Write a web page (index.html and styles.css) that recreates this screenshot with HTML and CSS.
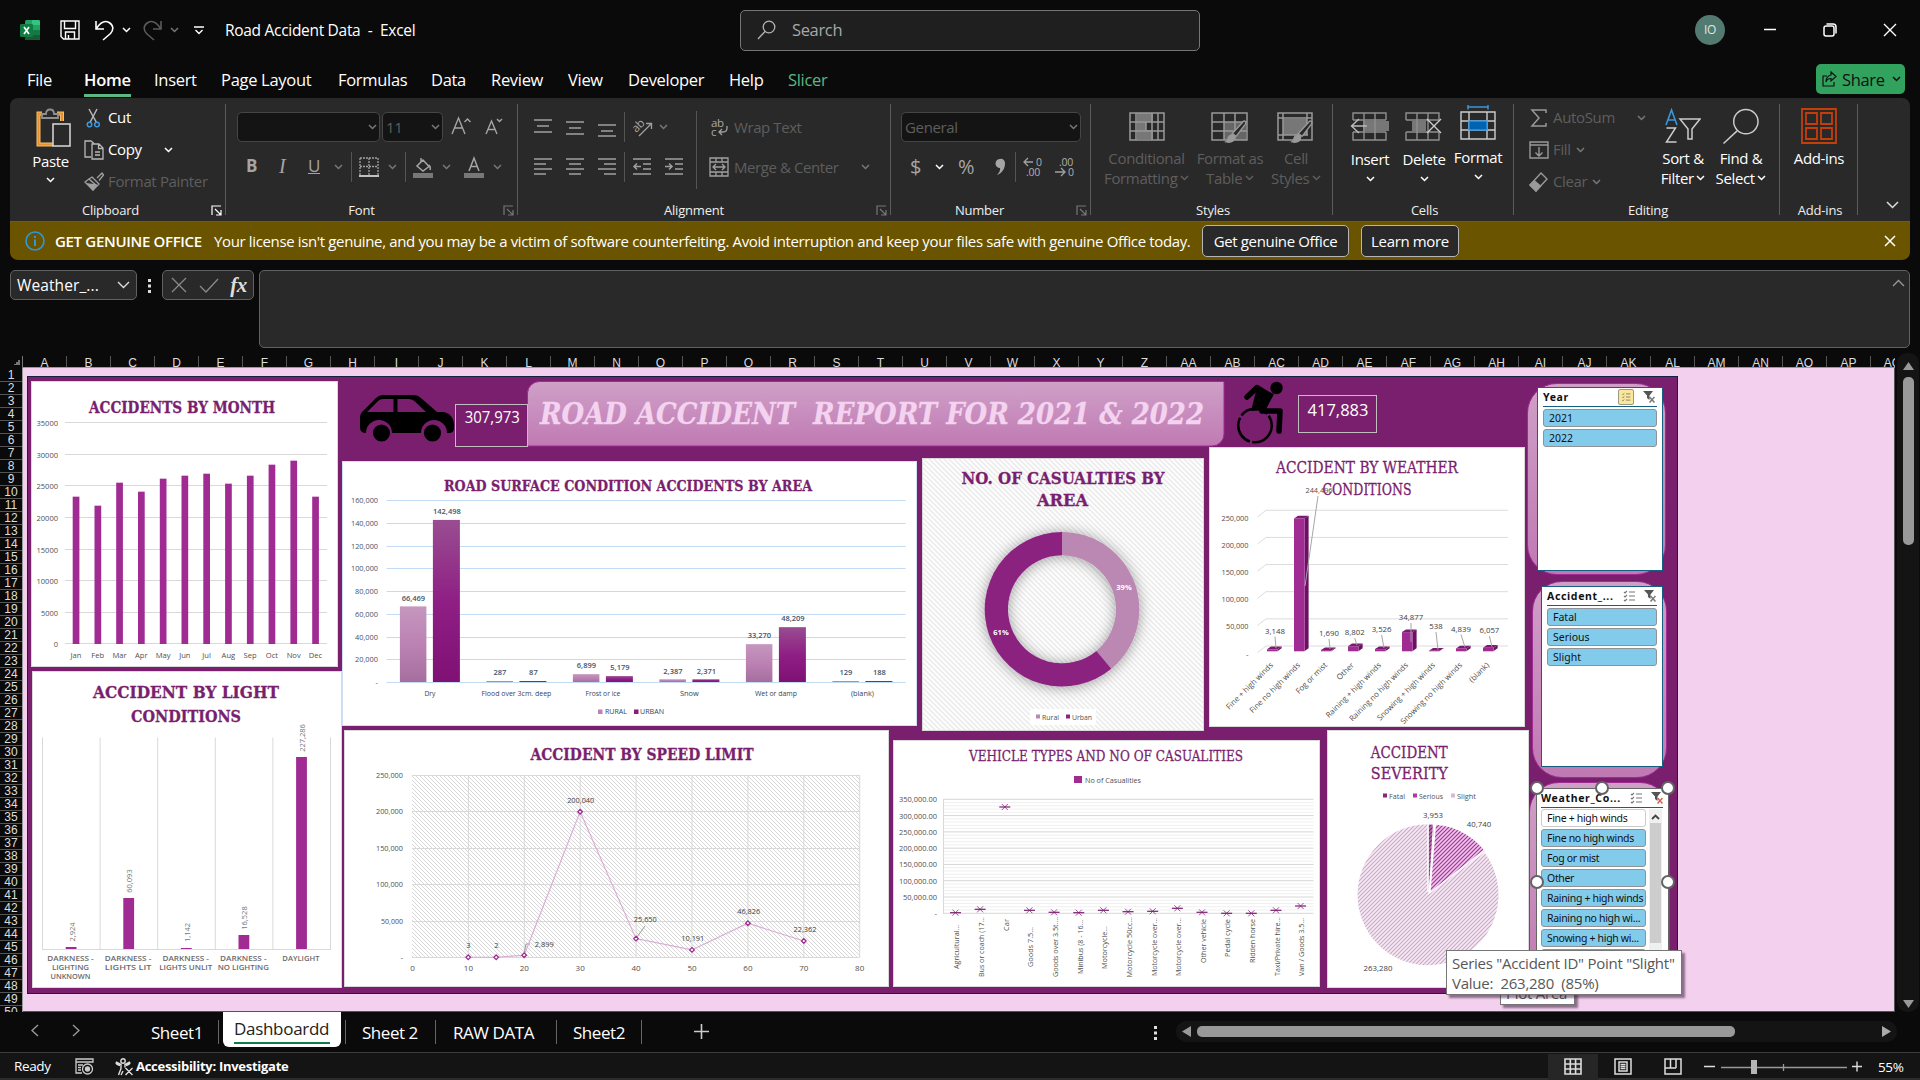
FILE: index.html
```html
<!DOCTYPE html>
<html lang="en">
<head>
<meta charset="utf-8">
<title>Road Accident Data - Excel</title>
<link rel="stylesheet" href="styles.css">
</head>
<body>
<svg class="defs" aria-hidden="true">
  <symbol id="chev" viewBox="0 0 9 6"><path d="M1 1l3.500 3.500L8 1" fill="none" stroke="currentColor" stroke-width="1.500"/></symbol>
  <symbol id="launch" viewBox="0 0 11 11"><path d="M1 10V1h9M4 4l6 6M10 5v5H5" fill="none" stroke="currentColor" stroke-width="1.200"/></symbol>
  <symbol id="brush" viewBox="0 0 22 22"><path d="M20 1c1.500 1 1 2 .3 3L12 15l-3.500-2.500L18 2q1-1.300 2-1z" fill="#292929" stroke="currentColor" stroke-width="1.300"/><path d="M8 13c3 0 4 3 2.500 5.500S4 22 1 20c3-1 2.500-2 3.300-4.500Q5.500 13 8 13z" fill="currentColor"/></symbol>
  <symbol id="multi" viewBox="0 0 12 12"><path d="M1 2l1 1 2-2M1 6l1 1 2-2M1 10l1 1 2-2M6 2h6M6 6h6M6 10h6" fill="none" stroke="currentColor" stroke-width="1.100"/></symbol>
  <symbol id="funnel" viewBox="0 0 12 12"><path d="M0 0h10L6.500 4.500V9L4 7V4.500z" fill="#555"/><path d="M6.500 6l5 5.500M11.500 6l-5 5.500" stroke="currentColor" stroke-width="1.500"/></symbol>
</svg>

<header class="titlebar">
  <div class="quick">
    <svg width="20" height="20" viewBox="0 0 20 20"><rect x="5" width="15" height="20" rx="1.500" fill="#21a366"/><path d="M12 0h6.500A1.500 1.500 0 0 1 20 1.500V5h-8z" fill="#33c481"/><path d="M5 5h7v5H5zM12 10h8v5h-8z" fill="#107c41"/><path d="M5 15h15v3.500a1.500 1.500 0 0 1-1.500 1.500h-12A1.500 1.500 0 0 1 5 18.500z" fill="#185c37"/><rect y="4" width="13" height="13" rx="1.200" fill="#107c41"/><path d="M4 7l5 7M9 7l-5 7" stroke="#fff" stroke-width="1.700"/></svg>
    <svg width="20" height="20" viewBox="0 0 20 20" fill="none" stroke="#fff" stroke-width="1.400"><path d="M1 1h18v18H3.500L1 16.500zM4.500 1v7.500h11V1M5.500 19v-7h9v7M8.500 19v-4"/></svg>
    <svg width="19" height="21" viewBox="0 0 19 21" fill="none" stroke="#fff" stroke-width="1.600"><path d="M1 1v8h8M1.500 8.500C5 3 9.500 0 14 2.500s5 7 1.500 11L8 20"/></svg>
    <svg class="chev light" width="9" height="6"><use href="#chev"/></svg>
    <svg width="19" height="21" viewBox="0 0 19 21" fill="none" stroke="#5a5a5a" stroke-width="1.600"><path d="M18 1v8h-8M17.500 8.500C14 3 9.500 0 5 2.500s-5 7-1.500 11L11 20"/></svg>
    <svg class="chev" width="9" height="6"><use href="#chev"/></svg>
    <svg width="10" height="9" viewBox="0 0 10 9" fill="none" stroke="#fff" stroke-width="1.400"><path d="M0 1h10M1.500 4L5 7.500 8.500 4"/></svg>
    <span class="doc">Road Accident Data &nbsp;-&nbsp; Excel</span>
  </div>
  <div class="search">
    <svg width="19" height="20" viewBox="0 0 19 20" fill="none" stroke="#b5b5b5" stroke-width="1.300"><circle cx="12" cy="7" r="5.800"/><path d="M8 11.500L1 19"/></svg>
    <span>Search</span>
  </div>
  <div class="window">
    <span class="avatar">IO</span>
    <svg width="12" height="4"><path d="M0 1.500h12" stroke="#fff" stroke-width="1.500"/></svg>
    <svg width="14" height="14" viewBox="0 0 14 14" fill="none" stroke="#fff" stroke-width="1.500"><rect x="1" y="3" width="10" height="10" rx="2"/><path d="M3.500 1H10a3 3 0 0 1 3 3v6.500"/></svg>
    <svg width="14" height="14" viewBox="0 0 14 14"><path d="M1 1l12 12M13 1L1 13" stroke="#fff" stroke-width="1.400"/></svg>
  </div>
</header>

<nav class="menu">
  <span>File</span><span class="on">Home</span><span>Insert</span><span>Page Layout</span><span>Formulas</span><span>Data</span><span>Review</span><span>View</span><span>Developer</span><span>Help</span><span class="ctx">Slicer</span>
  <button class="share"><svg width="15" height="16" viewBox="0 0 15 16" fill="none" stroke="#111" stroke-width="1.200"><path d="M5 5H1v10h11v-4M9 1l5 4.500L9 10V7.500q-4 0-5 3.500 0-6 5-7z"/></svg><b>Share</b><svg class="chev" width="9" height="6"><use href="#chev"/></svg></button>
</nav>

<section class="ribbon">
  <div class="group g-clip">
    <div class="body">
      <div class="big">
        <svg width="35" height="39" viewBox="0 0 35 39" fill="none"><path d="M6 5.500H2.500v31H17M21 5.500h5V13" stroke="#f0c070" stroke-width="4"/><path d="M6 5.500H2.500v31H17M21 5.500h5V13" stroke="#e8912d" stroke-width="2"/><path d="M6 10V6h4q0-4.500 4-4.500T18 6h4v4z" fill="#292929" stroke="#8f8f8f" stroke-width="1.800"/><rect x="17" y="16" width="17" height="22" fill="#292929" stroke="#d0d0d0" stroke-width="1.600"/></svg>
        <span>Paste</span><svg class="chev light" width="9" height="6"><use href="#chev"/></svg>
      </div>
      <div class="list">
        <div><svg width="20" height="20" viewBox="0 0 20 20" fill="none"><path d="M5 1l7.500 13.500M13 1L6 14.500" stroke="#b8b8b8" stroke-width="1.500"/><circle cx="5.500" cy="16.500" r="2.300" stroke="#3a96dd" stroke-width="1.500"/><circle cx="13" cy="16.500" r="2.300" stroke="#3a96dd" stroke-width="1.500"/></svg><span>Cut</span></div>
        <div><svg width="20" height="20" viewBox="0 0 20 20" fill="none" stroke="#b8b8b8" stroke-width="1.300"><path d="M7 17H1V1h6l3 2.500M8 4h7l4 4v11H8zM14.500 4v4.500H19M11 12h5M11 15h5"/></svg><span>Copy</span><svg class="chev light far" width="9" height="6"><use href="#chev"/></svg></div>
        <div class="off"><svg width="20" height="20" viewBox="0 0 20 20" fill="none" stroke="#a0a0a0" stroke-width="1.300"><path d="M13 6l5-5 1.500 2-4.500 5.500M8 5l7 7-2 2-8-7zM5 7l-4 3 8 8 4-4"/><path d="M4 12l8 1-3 5z" fill="#a0a0a0"/></svg><span>Format Painter</span></div>
      </div>
    </div>
    <footer><span>Clipboard</span><svg class="light" width="11" height="11"><use href="#launch"/></svg></footer>
  </div>
  <div class="group g-font">
    <div class="rows">
      <div class="r1"><div class="combo"><span></span><svg class="chev" width="9" height="6"><use href="#chev"/></svg></div><div class="combo s"><span>11</span><svg class="chev" width="9" height="6"><use href="#chev"/></svg></div>
        <svg width="20" height="20" viewBox="0 0 20 20" fill="none" stroke="#a5a5a5" stroke-width="1.400"><path d="M1 17L7.500 1 14 17M3.500 11h8M13.500 5L16.500 2l3 3"/></svg>
        <svg width="20" height="20" viewBox="0 0 20 20" fill="none" stroke="#a5a5a5" stroke-width="1.400"><path d="M1 17L6.500 4 12 17M3 12.500h7M12 2l2.500 2.500L17 2"/></svg></div>
      <div class="r2"><b class="glyph">B</b><i class="glyph it">I</i><u class="glyph">U</u><svg class="chev" width="9" height="6"><use href="#chev"/></svg><hr>
        <svg width="20" height="20" viewBox="0 0 20 20"><path d="M1 1h18M1 9.500h18M1 1v17M10 1v17M19 1v17" stroke="#a0a0a0" stroke-width="1.300" stroke-dasharray="2 1"/><path d="M0 19h20" stroke="#c0c0c0" stroke-width="2"/></svg><svg class="chev" width="9" height="6"><use href="#chev"/></svg><hr>
        <svg width="20" height="21" viewBox="0 0 20 21" fill="none"><path d="M8 1v5M10 3l6 6.500-6 4.500-6-5zM16 8q2 3 1 5" stroke="#a5a5a5" stroke-width="1.500"/><path d="M0 18.500h20" stroke="#777" stroke-width="5"/></svg><svg class="chev" width="9" height="6"><use href="#chev"/></svg>
        <svg width="20" height="21" viewBox="0 0 20 21" fill="none"><path d="M5 14l5-13 5 13M6.500 9.500h7" stroke="#a5a5a5" stroke-width="1.500"/><path d="M0 18.500h20" stroke="#777" stroke-width="5"/></svg><svg class="chev" width="9" height="6"><use href="#chev"/></svg></div>
    </div>
    <footer><span>Font</span><svg width="11" height="11"><use href="#launch"/></svg></footer>
  </div>
  <div class="group g-align">
    <div class="body">
      <div class="rows">
        <div class="r1"><svg class="ln" width="18" height="20"><path d="M0 3h18M3 9h12M0 15h18"/></svg><svg class="ln" width="18" height="20"><path d="M0 5h18M3 11h12M0 17h18"/></svg><svg class="ln" width="18" height="20"><path d="M0 8h18M3 14h12M0 19h18"/></svg><hr>
          <svg width="21" height="21" viewBox="0 0 21 21"><text x="0" y="12" class="ab" transform="rotate(-45 7 9)">ab</text><path d="M7 19L19 7M14 6.500h5.500V12" fill="none" stroke="#a0a0a0" stroke-width="1.300"/></svg><svg class="chev" width="9" height="6"><use href="#chev"/></svg></div>
        <div class="r2"><svg class="ln" width="18" height="18"><path d="M0 1h18M0 6h12M0 11h18M0 16h12"/></svg><svg class="ln" width="18" height="18"><path d="M0 1h18M3 6h12M0 11h18M3 16h12"/></svg><svg class="ln" width="18" height="18"><path d="M0 1h18M6 6h12M0 11h18M6 16h12"/></svg><hr>
          <svg class="ln" width="18" height="18"><path d="M0 1h18M10 6h8M10 11h8M0 16h18M1 8.500h7M4 5.500l-3 3 3 3"/></svg><svg class="ln" width="18" height="18"><path d="M0 1h18M10 6h8M10 11h8M0 16h18M0 8.500h7M4 5.500l3 3-3 3"/></svg></div>
      </div>
      <hr class="tall">
      <div class="rows off wide">
        <div><svg width="20" height="21" viewBox="0 0 20 21"><text x="2" y="9.500" class="ab">ab</text><text x="2" y="19" class="ab">c</text><path d="M18 9v2q0 4-4 4h-4M13 12l-3 3 3 3" fill="none" stroke="#a0a0a0" stroke-width="1.300"/></svg><span>Wrap Text</span></div>
        <div><svg width="20" height="20" viewBox="0 0 20 20" fill="none" stroke="#a0a0a0" stroke-width="1.300"><path d="M1 1h18v18H1zM1 5h18M1 15h18M7 1v4M13 1v4M7 15v4M13 15v4M4 10h12M7 7l-3 3 3 3M13 7l3 3-3 3"/></svg><span>Merge &amp; Center</span><svg class="chev" width="9" height="6"><use href="#chev"/></svg></div>
      </div>
    </div>
    <footer><span>Alignment</span><svg width="11" height="11"><use href="#launch"/></svg></footer>
  </div>
  <div class="group g-num">
    <div class="rows">
      <div class="r1"><div class="combo"><span>General</span><svg class="chev" width="9" height="6"><use href="#chev"/></svg></div></div>
      <div class="r2"><span class="sym">$</span><svg class="chev light" width="9" height="6"><use href="#chev"/></svg><span class="sym">%</span><svg width="11" height="18" viewBox="0 0 11 18"><path d="M5 1a4 4 0 0 1 5 4.500C10 11 7 15 2 17c2.500-3 3.500-5 3-7A4.500 4.500 0 0 1 5 1z" fill="#a5a5a5"/></svg><hr>
        <svg width="21" height="22" viewBox="0 0 21 22"><path d="M1 6h9M5 2L1 6l4 4" fill="none" stroke="#a0a0a0" stroke-width="1.300"/><text x="13" y="10" class="dec">0</text><text x="3" y="20" class="dec">.00</text></svg>
        <svg width="21" height="22" viewBox="0 0 21 22"><text x="4" y="10" class="dec">.00</text><path d="M0 16h10M6 12l4 4-4 4" fill="none" stroke="#a0a0a0" stroke-width="1.300"/><text x="13" y="20" class="dec">0</text></svg></div>
    </div>
    <footer><span>Number</span><svg width="11" height="11"><use href="#launch"/></svg></footer>
  </div>
  <div class="group g-styles off">
    <div class="cols">
      <div class="big2"><svg width="36" height="34" viewBox="0 0 36 34"><path d="M8 5h16v9H17v8H24v9H8z" fill="#777"/><path d="M1 5h34v27H1zM1 14h34M1 23h34M7 5v27M17 14v9M23 5v27M29 5v27" fill="none" stroke="#999" stroke-width="1.500"/></svg><span>Conditional</span><span>Formatting <svg class="chev" width="9" height="6"><use href="#chev"/></svg></span></div>
      <div class="big2"><svg width="38" height="34" viewBox="0 0 38 34"><path d="M13 14h22v18H13z" fill="#666"/><path d="M1 5h35v27H1zM1 14h35M1 23h35M13 5v27M24 5v27" fill="none" stroke="#999" stroke-width="1.500"/><use href="#brush" x="10" y="12" width="28" height="24"/></svg><span>Format as</span><span>Table <svg class="chev" width="9" height="6"><use href="#chev"/></svg></span></div>
      <div class="big2"><svg width="38" height="34" viewBox="0 0 38 34"><path d="M6 11h24v16H6z" fill="#777"/><path d="M1 5h34v27H1zM1 10h34M6 5v27M30 5v22M1 27h30" fill="none" stroke="#999" stroke-width="1.500"/><use href="#brush" x="10" y="12" width="28" height="24"/></svg><span>Cell</span><span>Styles <svg class="chev" width="9" height="6"><use href="#chev"/></svg></span></div>
    </div>
    <footer class="plain"><span>Styles</span></footer>
  </div>
  <div class="group g-cells">
    <div class="cols">
      <div class="big2 v"><svg width="40" height="34" viewBox="0 0 40 34"><path d="M13 13h26v10H13z" fill="#777"/><path d="M3 12V5h33v7M3 24v8h33v-8M14 5v27M25 5v27M3 12h33M3 24h33" fill="none" stroke="#8f8f8f" stroke-width="1.400"/><path d="M1 18h16M9 11l-7.500 7L9 25" fill="none" stroke="#bbb" stroke-width="1.400"/></svg><span>Insert</span><svg class="chev" width="9" height="6"><use href="#chev"/></svg></div>
      <div class="big2 v"><svg width="40" height="34" viewBox="0 0 40 34"><path d="M8 13h14v10H8z" fill="#777"/><path d="M2 12V5h33v7M2 24v8h33v-8M13 5v27M24 5v27M2 12h33M2 24h33" fill="none" stroke="#8f8f8f" stroke-width="1.400"/><path d="M23 11l14 14M37 11L23 25" fill="none" stroke="#ccc" stroke-width="1.400"/></svg><span>Delete</span><svg class="chev" width="9" height="6"><use href="#chev"/></svg></div>
      <div class="big2 v2"><svg width="36" height="36" viewBox="0 0 36 36" fill="none"><path d="M8 2h20M8 0v4.500M28 0v4.500" stroke="#3a96dd" stroke-width="1.500"/><path d="M1 7h34v27H1zM1 16h34M1 25h34M9 7v27M27 7v27" stroke="#ccc" stroke-width="1.400"/><rect x="9" y="16" width="18" height="9" fill="#0063b1" stroke="#3a96dd" stroke-width="1.400"/></svg><span>Format</span><svg class="chev" width="9" height="6"><use href="#chev"/></svg></div>
    </div>
    <footer class="plain"><span>Cells</span></footer>
  </div>
  <div class="group g-edit">
    <div class="body">
      <div class="list off">
        <div><svg width="20" height="20" viewBox="0 0 20 20" fill="none" stroke="#999" stroke-width="1.500"><path d="M17 5V2H3l7 8-7 8h14v-3"/></svg><span>AutoSum</span><svg class="chev far" width="9" height="6"><use href="#chev"/></svg></div>
        <div><svg width="20" height="20" viewBox="0 0 20 20" fill="none" stroke="#999" stroke-width="1.400"><path d="M1 2h18v16H1zM1 5h18M10 7v9M6.500 12.500L10 16l3.500-3.500"/></svg><span>Fill</span><svg class="chev" width="9" height="6"><use href="#chev"/></svg></div>
        <div><svg width="20" height="20" viewBox="0 0 20 20" fill="none" stroke="#999" stroke-width="1.400"><path d="M12 1l6 6-11 12-6-6z"/><path d="M5.500 9l6 5-4.500 5-6-6z" fill="#999"/></svg><span>Clear</span><svg class="chev" width="9" height="6"><use href="#chev"/></svg></div>
      </div>
      <div class="big2"><svg width="36" height="36" viewBox="0 0 36 36" fill="none"><path d="M1 17L6.500 2 12 17M3 12h7" stroke="#3a96dd" stroke-width="1.600"/><path d="M1.500 20h9L1.500 34h10" stroke="#ccc" stroke-width="1.500"/><path d="M15 11h20l-8 10v10h-4V21z" stroke="#ccc" stroke-width="1.500"/></svg><span>Sort &amp;</span><span>Filter <svg class="chev" width="9" height="6"><use href="#chev"/></svg></span></div>
      <div class="big2 find"><svg width="38" height="37" viewBox="0 0 38 37" fill="none" stroke="#ccc" stroke-width="1.500"><circle cx="24" cy="14" r="12.500"/><path d="M15 23.500L1 36.500"/></svg><span>Find &amp;</span><span>Select <svg class="chev" width="9" height="6"><use href="#chev"/></svg></span></div>
    </div>
    <footer class="plain"><span>Editing</span></footer>
  </div>
  <div class="group g-add">
    <div class="body"><div class="big2"><svg width="36" height="36" viewBox="0 0 36 36" fill="none" stroke="#c43e0a" stroke-width="1.800"><path d="M1 1h34v34H1zM5 5h11v11H5zM20 5h11v11H20zM5 20h11v11H5zM20 20h11v11H20z"/></svg><span>Add-ins</span></div></div>
    <footer class="plain"><span>Add-ins</span></footer>
  </div>
  <svg class="fold" width="13" height="8" viewBox="0 0 13 8"><path d="M1 1l5.500 5.500L12 1" fill="none" stroke="#ddd" stroke-width="1.500"/></svg>
</section>

<section class="notice">
  <svg width="20" height="20" viewBox="0 0 20 20" fill="none" stroke="#2f96d8" stroke-width="1.600"><circle cx="10" cy="10" r="9"/><path d="M10 8.500V15M10 5v2" stroke-width="2"/></svg>
  <b>GET GENUINE OFFICE</b>
  <span>Your license isn't genuine, and you may be a victim of software counterfeiting. Avoid interruption and keep your files safe with genuine Office today.</span>
  <button class="n1">Get genuine Office</button><button class="n2">Learn more</button>
  <svg class="x" width="12" height="12" viewBox="0 0 12 12"><path d="M1 1l10 10M11 1L1 11" stroke="#fff" stroke-width="1.500"/></svg>
</section>

<section class="formula">
  <div class="name"><span>Weather_...</span><svg width="13" height="8" viewBox="0 0 13 8"><path d="M1 1l5.500 5.500L12 1" fill="none" stroke="#ddd" stroke-width="1.400"/></svg></div>
  <svg width="4" height="14" fill="#ddd"><path d="M0 0h3v3H0zM0 5.500h3v3H0zM0 11h3v3H0z"/></svg>
  <div class="fx"><svg width="16" height="16"><path d="M1 1l14 14M15 1L1 15" stroke="#8a8a8a" stroke-width="1.300"/></svg><svg width="20" height="15"><path d="M1 8l6 6L19 1" fill="none" stroke="#8a8a8a" stroke-width="1.300"/></svg><i>fx</i></div>
  <div class="bar"><svg width="13" height="8" viewBox="0 0 13 8"><path d="M1 7l5.500-5.500L12 7" fill="none" stroke="#999" stroke-width="1.300"/></svg></div>
</section>

<main class="grid">
  <div class="corner"></div>
  <div class="cols-head" id="cols"></div>
  <div class="rows-head" id="rows"></div>
  <div class="sheet" id="sheet">
    <div class="board"></div>
    <div class="panel p1"></div><div class="panel p2"></div><div class="panel p3"></div>
    <div class="slicer s1">
      <header><b>Year</b><svg class="hot" width="16" height="16" viewBox="-3 -2 18 16"><use href="#multi" width="12" height="12"/></svg><svg width="12" height="12"><use href="#funnel"/></svg></header>
      <div class="items"><span>2021</span><span>2022</span></div>
    </div>
    <div class="slicer s2">
      <header><b>Accident_...</b><svg width="12" height="12"><use href="#multi"/></svg><svg width="12" height="12"><use href="#funnel"/></svg></header>
      <div class="items"><span>Fatal</span><span>Serious</span><span>Slight</span></div>
    </div>
    <div class="slicer s3">
      <header><b>Weather_Co...</b><svg width="12" height="12"><use href="#multi"/></svg><svg class="red" width="12" height="12"><use href="#funnel"/></svg></header>
      <div class="split">
        <div class="items"><span class="no">Fine + high winds</span><span>Fine no high winds</span><span>Fog or mist</span><span>Other</span><span>Raining + high winds</span><span>Raining no high wi...</span><span>Snowing + high wi...</span><span></span></div>
        <div class="sb"><svg width="9" height="6" viewBox="0 0 9 6"><path d="M1 5l3.500-3.500L8 5" fill="none" stroke="#444" stroke-width="1.800"/></svg><div></div></div>
      </div>
    </div>
    <i class="h h1"></i><i class="h h2"></i><i class="h h3"></i><i class="h h4"></i><i class="h h5"></i>
    <div class="tip plot">Plot Area</div>
    <div class="tip series">Series "Accident ID" Point "Slight"<br>Value: &nbsp;263,280 &nbsp;(85%)</div>
  </div>
  <div class="vscroll"><svg width="11" height="8"><path d="M5.500 0L11 8H0z" fill="#999"/></svg><div></div><svg width="11" height="8"><path d="M0 0h11L5.500 8z" fill="#999"/></svg></div>
</main>

<section class="tabs">
  <svg class="nav" width="8" height="13"><path d="M7 1L1 6.500 7 12" fill="none" stroke="#999" stroke-width="1.400"/></svg>
  <svg class="nav nx" width="8" height="13"><path d="M1 1l6 5.500L1 12" fill="none" stroke="#999" stroke-width="1.400"/></svg>
  <span class="t1">Sheet1</span><span class="act"><em>Dashboardd</em></span><span class="t2">Sheet 2</span><span class="t3">RAW DATA</span><span class="t4">Sheet2</span>
  <svg class="plus" width="15" height="15"><path d="M7.500 0v15M0 7.500h15" stroke="#ccc" stroke-width="1.600"/></svg>
  <svg class="dots" width="4" height="14" fill="#ddd"><path d="M0 0h3v3H0zM0 5.500h3v3H0zM0 11h3v3H0z"/></svg>
  <div class="hscroll"><svg width="9" height="11"><path d="M9 0v11L0 5.500z" fill="#999"/></svg><div></div><svg width="9" height="11"><path d="M0 0v11l9-5.500z" fill="#aaa"/></svg></div>
</section>

<footer class="status">
  <span class="ready">Ready</span>
  <svg width="19" height="17" viewBox="0 0 19 17" fill="none" stroke="#ccc" stroke-width="1.300"><path d="M1 1h17v3H1zM1 4v11h6M3 7h5M3 9.500h3M3 12h3"/><circle cx="12.500" cy="11" r="5"/><circle cx="12.500" cy="11" r="2" fill="#ccc"/></svg>
  <svg class="acc" width="19" height="18" viewBox="0 0 19 18" fill="none" stroke="#ddd" stroke-width="1.400"><circle cx="8" cy="3" r="2.200"/><path d="M1 4l5 2.500v4L3.500 17M15 4l-5 2.500v3M1 4.500q0 2 4 3M15 4.500q0 2-4 3M6 17l2-4M10.500 10l7 7M17.500 10l-7 7"/></svg>
  <b>Accessibility: Investigate</b>
  <div class="views">
    <span class="sel"><svg width="18" height="17" viewBox="0 0 18 17"><path d="M1 1h16v15H1zM1 6h16M1 11h16M6.300 1v15M11.600 1v15" fill="none" stroke="#ddd" stroke-width="1.600"/></svg></span>
    <span><svg width="18" height="17" viewBox="0 0 18 17"><path d="M1 1h16v15H1zM5 4h8v9H5zM6.500 6.500h5M6.500 8.500h5M6.500 10.500h5" fill="none" stroke="#ddd" stroke-width="1.500"/></svg></span>
    <span><svg width="18" height="17" viewBox="0 0 18 17"><path d="M1 1h16v15H1zM1 10h11M6.500 1v9M12 1v9" fill="none" stroke="#ddd" stroke-width="1.500"/></svg></span>
  </div>
  <svg class="zoom" width="158" height="18" viewBox="0 0 158 18"><path d="M0 8.500h11M148 8.500h10M153 3.500v10" stroke="#ddd" stroke-width="1.400"/><path d="M17 9.500h126M79.500 6v7" stroke="#999" stroke-width="1.300"/><rect x="47" y="2" width="6" height="14" fill="#b5b5b5"/></svg>
  <span class="pct">55%</span>
</footer>
<script src="script.js"></script>
</body>
</html>
```

FILE: styles.css
```css
* { box-sizing: border-box; }
body { margin: 0; width: 1920px; height: 1080px; overflow: hidden; background: #0a0a0a; color: #fff; font: 16px "Open Sans", "Noto Sans", sans-serif; display: flex; flex-direction: column; letter-spacing: -.35px; }
svg { display: block; flex: none; }
button { font: inherit; letter-spacing: inherit; color: inherit; padding: 0; margin: 0; }
span, b { white-space: nowrap; }
.defs { width: 0; height: 0; position: absolute; }
.chev { color: #777; }
.light { color: #fff; }
.off { color: #5e5e5e; }
hr { margin: 0; border: 0; width: 1px; height: 30px; background: #555; }

/* title bar */
.titlebar { height: 60px; flex: none; display: flex; align-items: center; }
.quick { width: 740px; display: grid; grid-template-columns: 40px 35px 27px 21px 27px 24px 31px auto; align-items: center; padding-left: 20px; }
.doc { font-size: 15.500px; letter-spacing: -.3px; }
.search { width: 460px; height: 41px; border: 1px solid #757575; border-radius: 5px; background: #1f1f1f; display: flex; align-items: center; gap: 16px; padding-left: 16px; color: #a8a8a8; font-size: 16.500px; }
.search span { margin-top: -2px; }
.window { flex: 1; display: flex; align-items: center; justify-content: flex-end; padding-right: 23px; gap: 46px; }
.window svg:nth-of-type(1) { margin-right: 1px; }
.avatar { width: 30px; height: 30px; border-radius: 50%; background: #527a70; color: #dfe8e5; font-size: 12px; text-align: center; line-height: 30px; margin-right: -7px; }

/* ribbon tabs */
.menu { height: 38px; flex: none; display: grid; grid-template-columns: 57px 70px 67px 117px 93px 60px 77px 60px 101px 59px 1028px 89px; padding-left: 27px; font-size: 16.500px; align-items: center; }
.menu span { line-height: 30px; height: 35px; width: max-content; padding-top: 3px; letter-spacing: -.3px; }
.menu .on { font-weight: 600; border-bottom: 3px solid #5cb883; letter-spacing: -.25px; }
.menu .ctx { color: #5cb883; }
.share { height: 30px; align-self: start; margin-top: 4px; background: #32a35e; border: 0; border-radius: 5px; display: flex; align-items: center; gap: 5px; padding-left: 6px; color: #101010; }
.share b { font-weight: 400; font-size: 16.500px; }
.share .chev { color: #111; margin-left: 2px; }

/* ribbon */
.ribbon { height: 124px; flex: none; margin: 0 10px; background: #292929; border-radius: 8px 8px 0 0; border-bottom: 1px solid #5b5b5b; display: flex; }
.group { flex: none; display: flex; flex-direction: column; background: linear-gradient(#5b5b5b, #5b5b5b) right 6px / 1px 111px no-repeat; }
.body { display: flex; height: 100px; }
.group footer { height: 23px; line-height: 23px; padding: 1px 4px 0 0; font-size: 13px; color: #eee; display: grid; grid-template-columns: 1fr auto; align-items: center; text-align: center; letter-spacing: -.2px; }
.group footer.plain { padding-right: 0; padding-left: 2px; grid-template-columns: 1fr; }
.group footer svg { color: #777; }
.group footer svg.light { color: #fff; }
.g-font footer span, .g-align footer span { padding-right: 6px; }
.g-num footer span { padding-right: 8px; }
.g-clip { width: 216px; } .g-font { width: 292px; } .g-align { width: 373px; } .g-num { width: 200px; }
.g-styles { width: 242px; } .g-cells { width: 181px; } .g-edit { width: 266px; } .g-add { width: 78px; }
.big { width: 74px; display: flex; flex-direction: column; align-items: center; padding: 10px 0 0 7px; font-size: 15px; }
.big > svg:first-child { margin-left: 5px; }
.big span { margin: 4px 0 6px; line-height: 20px; }
.list { display: flex; flex-direction: column; padding-top: 4px; font-size: 15px; }
.list > div { height: 32px; display: flex; align-items: center; gap: 5px; }
.list span { margin: -2px 0 0 -1px; }
.far { margin-left: 17px; }
.rows { height: 100px; display: flex; flex-direction: column; gap: 10px; padding: 14px 0 0 10px; }
.rows > div { height: 30px; display: grid; align-items: center; }
.combo { height: 30px; border: 1px solid #454545; border-radius: 5px; background: #141414; display: flex; align-items: center; justify-content: space-between; padding: 0 2px 0 3px; color: #5e5e5e; font-size: 15px; }
.g-font .r1 { grid-template-columns: 145px 69px 34px 20px; }
.g-font .rows { padding-left: 11px; }
.g-font .combo { width: 143px; } .g-font .combo.s { width: 61px; }
.g-font .r2 { padding-left: 9px; grid-template-columns: 33px 29px 26px 17px 8px 29px 17px 8px 29px 22px 29px 10px; }
.glyph { color: #a5a5a5; font-size: 17px; line-height: 20px; margin-top: -2px; }
.it { font-family: "Liberation Serif", serif; font-size: 20px; }
.g-align .rows { padding-left: 16px; width: 178px; }
.g-align .r1 { grid-template-columns: 32px 32px 26px 8px 27px 10px; }
.g-align .r2 { grid-template-columns: 32px 32px 26px 9px 32px 20px; }
.ln { fill: none; stroke: #a0a0a0; stroke-width: 1.500; }
.g-align .tall { height: 78px; margin-top: 13px; }
.g-align .wide { padding-left: 12px; width: 190px; font-size: 15px; letter-spacing: -.42px; }
.wide > div { grid-template-columns: 25px 127px 10px; }
.rows svg { overflow: visible; }
.ab { font: 11.500px "Open Sans", sans-serif; fill: #a8a8a8; }
.dec { font: 10.500px "Open Sans", sans-serif; fill: #b0b0b0; letter-spacing: -.3px; }
.g-num .r1 { grid-template-columns: 180px; }
.g-num .r2 { padding-left: 9px; grid-template-columns: 25px 23px 37px 20px 8px 32px 21px; }
.sym { font-size: 20px; color: #a5a5a5; line-height: 28px; }
.cols { height: 100px; display: flex; }
.big2 { display: flex; flex-direction: column; align-items: center; font-size: 15px; line-height: 20px; padding-top: 10px; }
.big2 > svg:first-child { height: 36px; margin-bottom: 4px; }
.big2 .chev { display: inline-block; vertical-align: 3px; color: currentColor; margin-left: -1px; }
.g-styles .big2 { width: 82px; padding-top: 9px; } .g-styles .big2:nth-child(1) { width: 98px; padding-left: 13px; } .g-styles .big2:nth-child(3) { width: 50px; }
.g-styles .big2 > svg { color: #999; }
.g-styles .big2 > svg:first-child { margin-bottom: 5px; }
.g-cells .cols { padding-left: 10px; }
.g-cells .big2 { width: 54px; }
.g-cells .big2 > .chev { margin-left: 0; }
.big2.v > span, .big2.v2 > span { margin: 2px 0 7px; }
.g-cells .v > svg:first-child { margin-top: -1px; }
.big2.v2 { padding-top: 7px; }
.g-edit .list { padding-left: 15px; width: 140px; flex: none; font-size: 15px; }
.g-edit .list .far { margin-left: 17px; }
.g-edit .big2 { width: 58px; }
.g-add .big2 { width: 78px; }
.fold { margin: 103px 0 0 28px; }

/* licence notice */
.notice { height: 38px; flex: none; margin: 0 10px; background: #6b5400; border-radius: 0 0 8px 8px; display: flex; align-items: center; padding-left: 15px; font-size: 15px; }
.notice b { width: 169px; padding-left: 10px; font-weight: 600; letter-spacing: -.32px; }
.notice span { width: 988px; letter-spacing: -.36px; }
.notice button { height: 32px; background: #292929; border: 1px solid #b5b5b5; border-radius: 5px; }
.n1 { width: 147px; } .n2 { width: 98px; margin-left: 12px; }
.notice .x { margin-left: auto; margin-right: 14px; }

/* formula bar */
.formula { height: 96px; flex: none; padding: 10px 10px 0; display: flex; align-items: flex-start; }
.formula > div { background: #292929; border: 1px solid #616161; border-radius: 5px; height: 30px; display: flex; align-items: center; }
.name { width: 127px; padding: 0 6px; justify-content: space-between; letter-spacing: .1px; font-size: 15.500px; }
.formula > svg { margin: 9px 10px 0 11px; }
.fx { width: 92px; justify-content: space-between; padding: 0 6px 0 8px; margin-right: 5px; }
.fx i { font: italic bold 21px "Liberation Serif", serif; color: #ddd; }
.formula > .bar { flex: 1; height: 78px; align-items: flex-start; justify-content: flex-end; padding: 8px 4px; }

/* worksheet */
.grid { height: 656px; flex: none; display: grid; grid-template: 12px 644px / 23px 1872px 25px; font: 12px "Liberation Sans", Arial, sans-serif; color: #ddd; letter-spacing: 0; }
.corner { background: linear-gradient(135deg, transparent 50%, #777 50%) 14px 3px / 6px 6px no-repeat; border-right: 1px solid #777; }
.cols-head { display: flex; overflow: hidden; border-bottom: 1px solid #999; }
.cols-head span { width: 44px; flex: none; text-align: center; line-height: 14px; height: 12px; border-right: 1px solid #555; }
.rows-head { overflow: hidden; grid-row: 2; border-right: 1px solid #999; padding-top: 1px; }
.rows-head span { display: block; height: 13px; line-height: 13px; text-align: center; border-bottom: 1px solid #555; }
.sheet { position: relative; overflow: hidden; background: #f2d0ee; border-bottom: 1px solid #555; border-right: 1px solid #555; }
.board { position: absolute; left: 4px; top: 8px; width: 1651px; height: 618px; background: #7a1f6e; border: 1px solid #14213f; }
.chart { position: absolute; z-index: 1; }
.chart text { font-family: "Open Sans", "Noto Sans", sans-serif; dominant-baseline: central; letter-spacing: 0; }
.chart .ttl { font-family: "DejaVu Serif", serif; fill: #7a1f6e; stroke: #7a1f6e; stroke-width: .3; }
.chart .banner { fill: #f4d3f0; stroke: #f4d3f0; stroke-width: .3; }
.panel { position: absolute; background: linear-gradient(#cf9fc7, #c079b3); border: 1px solid #a02b93; border-radius: 30px; }
.p1 { left: 1504px; top: 15px; width: 139px; height: 192px; }
.p2 { left: 1509px; top: 213px; width: 135px; height: 197px; }
.p3 { left: 1506px; top: 414px; width: 141px; height: 206px; }
.slicer { position: absolute; background: #fff; border: 1px solid #156082; color: #111; font: 10.500px "Noto Sans", sans-serif; z-index: 2; padding: 0 5px; }
.slicer header { height: 19px; border-bottom: 1px solid #156082; display: flex; align-items: center; gap: 9px; margin-bottom: 2px; }
.s1 header, .s2 header { padding-right: 2px; }
.slicer header b { flex: 1; font-size: 10.500px; font-weight: 700; letter-spacing: .65px; }
.slicer header svg { color: #777; } .slicer header .hot { background: #fbe69a; border: 1px solid #998; border-radius: 2px; }
.slicer header .red { color: #d8604a; }
.items { display: flex; flex-direction: column; gap: 2px; flex: 1; }
.items span { height: 18px; line-height: 16px; border: 1px solid #8f9296; border-radius: 3px; background: #83cbeb; padding-left: 5px; overflow: hidden; }
.items .no { background: #fff; border-color: #ccc; }
.s1 { left: 1514px; top: 19px; width: 126px; height: 184px; }
.s2 { left: 1518px; top: 218px; width: 122px; height: 181px; }
.s3 { left: 1513px; top: 420px; width: 133px; height: 200px; border: 1.500px solid #666; padding-left: 4px; }
.s3 header { width: 122px; margin-bottom: 1px; padding-right: 3px; }
.split { display: flex; gap: 3px; }
.s3 .items { flex: none; width: 105px; }
.s3 .items span { letter-spacing: -.32px; }
.sb { width: 13px; background: #f0f0f0; padding: 5px 1px; display: flex; flex-direction: column; align-items: center; gap: 3px; }
.sb div { width: 11px; height: 120px; background: #cdcdcd; }
.h { position: absolute; width: 14px; height: 14px; border: 2.500px solid #636363; border-radius: 50%; background: #fff; z-index: 3; }
.h1 { left: 1507px; top: 413px; } .h2 { left: 1572px; top: 413px; } .h3 { left: 1638px; top: 413px; } .h4 { left: 1507px; top: 507px; } .h5 { left: 1638px; top: 507px; }
.tip { position: absolute; z-index: 4; background: #fff; border: 1px solid #767676; color: #575757; font: 15px/20px "Open Sans", sans-serif; box-shadow: 3px 3px 2px rgba(60, 30, 60, .55); padding: 2px 5px; white-space: nowrap; letter-spacing: -.25px; }
.series { left: 1423px; top: 582px; width: 236px; height: 45px; }
.plot { left: 1477px; top: 612px; width: 75px; height: 25px; }
.vscroll { grid-column: 3; grid-row: 1 / 3; width: 22px; margin: -3px 0 0 2px; background: #141414; border-radius: 10px; display: flex; flex-direction: column; align-items: center; padding: 9px 0 4px; }
.vscroll div { width: 11px; height: 168px; margin: 7px 0 auto; background: #999; border-radius: 5px; }

/* sheet tabs */
.tabs { height: 40px; flex: none; display: flex; align-items: flex-start; font-size: 17px; letter-spacing: -.45px; }
.tabs > span { line-height: 26px; height: 24px; margin-top: 8px; border-right: 1px solid #666; }
.nav { margin: 12px 0 0 31px; } .nx { margin-left: 33px; }
.t1 { margin-left: 71px; width: 68px; }
.tabs > .act { margin: 0 4px 0 4px; width: 118px; height: 35px; background: #fff; border: 0; border-radius: 0 0 6px 6px; color: #222; padding: 5px 11px; line-height: 24px; }
.act em { display: block; font-style: normal; height: 27px; border-bottom: 2px solid #107c41; letter-spacing: -.3px; }
.t2 { width: 91px; padding-left: 16px; border-left: 1px solid #666; } .t3 { width: 121px; padding-left: 17px; } .t4 { width: 85px; padding-left: 16px; }
.plus { margin: 12px 0 0 52px; }
.dots { margin: 14px 0 0 445px; }
.hscroll { margin: 9px 0 0 18px; width: 721px; height: 21px; background: #141414; border-radius: 10px; display: flex; align-items: center; padding: 0 6px; }
.hscroll div { width: 538px; height: 11px; margin: 0 auto 0 6px; background: #999; border-radius: 5px; }

/* status bar */
.status { height: 28px; flex: none; background: linear-gradient(#2c2c2c, #2c2c2c) 0 100% / 100% 2px no-repeat, #141414; border-top: 1px solid #3c3c3c; display: flex; align-items: center; font-size: 13.500px; padding-left: 14px; }
.ready { width: 61px; }
.status .acc { margin: 0 2px 0 21px; }
.status b { letter-spacing: -.28px; font-weight: 700; font-size: 13px; margin-top: -1px; }
.status .ready { margin-top: -1px; }
.views { margin-left: auto; display: flex; }
.views span { width: 50px; height: 26px; display: grid; place-items: center; }
.views .sel { background: #262626; }
.zoom { margin-left: 6px; }
.pct { width: 25px; margin: 0 17px 0 16px; font-size: 13.500px; }
```

FILE: script.js
```js
// Worksheet headings
const cols = 'A B C D E F G H I J K L M N O P Q R S T U V W X Y Z AA AB AC AD AE AF AG AH AI AJ AK AL AM AN AO AP AQ'.split(' ');
document.getElementById('cols').innerHTML = cols.map(c => `<span>${c}</span>`).join('');
document.getElementById('rows').innerHTML = Array.from({ length: 50 }, (_, i) => `<span>${i + 1}</span>`).join('');

// Chart objects share the window's coordinate system; the sheet starts at (23, 368)
const sheet = document.getElementById('sheet');
function chart(x, y, r, b, body, bg = '#fff', edge = '#d9d9d9') {
  const w = r - x, h = b - y;
  const frame = bg ? `<rect x="${x + .5}" y="${y + .5}" width="${w - 1}" height="${h - 1}" fill="${bg}" stroke="${edge}"/>` : '';
  sheet.insertAdjacentHTML('beforeend', `<svg class="chart" viewBox="${x} ${y} ${w} ${h}" width="${w}" height="${h}" style="left:${x - 23}px;top:${y - 368}px">${frame}${body}</svg>`);
}
// Centred text; w fixes the drawn width
function t(x, y, s, o = {}) {
  const fit = o.w ? ` textLength="${o.w}" lengthAdjust="spacingAndGlyphs"` : '';
  if (!o.rot && !o.c) y -= .7;
  const rot = o.rot ? ` transform="rotate(${o.rot} ${x} ${y})"` : '';
  return `<text x="${x}" y="${y}" font-size="${o.fs || 8}" text-anchor="${o.a || 'middle'}" fill="${o.f || '#505050'}"${o.b ? ` font-weight="${o.b}"` : ''}${fit}${rot}${o.c || ''}>${s}</text>`;
}
const title = (x, y, s, w, b = 'bold', fs = 16.5) => t(x, y, s, { w, b, fs, c: ' class="ttl"' });
const line = (x1, y1, x2, y2, c = '#d9d9d9', w = 1) => `<path d="M${x1} ${y1}L${x2} ${y2}" stroke="${c}" stroke-width="${w}" fill="none"/>`;
const rect = (x, y, w, h, f) => `<rect x="${x}" y="${y}" width="${w}" height="${h}" fill="${f}"/>`;
const P = '#a02b93', fmt = n => n.toLocaleString('en-US');
let s;

// Accidents by month
s = title(182, 407, 'ACCIDENTS BY MONTH', 186);
for (let i = 0; i < 8; i++) {
  const y = Math.round(644.3 - i * 31.57) - .5;
  s += line(65, y, 327, y) + t(58, y + .7, i * 5000, { a: 'end', fs: 7.5, w: i > 1 ? 21.5 : i ? 17 : 0 });
}
[23333, 21908, 25550, 24125, 26184, 26659, 26975, 25392, 26659, 28401, 29035, 23333].forEach((v, i) => {
  const x = 76 + i * 21.77, h = v / 35000 * 221;
  s += rect((x - 3.3).toFixed(1), 644 - h, 6.7, h, P) + t(x, 655.8, 'Jan Feb Mar Apr May Jun Jul Aug Sep Oct Nov Dec'.split(' ')[i], { fs: 7.6 });
});
chart(31, 381, 338, 667, s);

// Accident by light conditions
s = title(186, 692, 'ACCIDENT BY LIGHT', 186) + title(186, 716, 'CONDITIONS', 110);
for (let i = 0; i < 6; i++) s += line(42.5 + i * 57.6, 737.5, 42.5 + i * 57.6, 949);
s += line(42, 949.5, 331, 949.5);
[[2924, 947, 932, 'DARKNESS -|LIGHTING|UNKNOWN'], [60093, 898, 881, 'DARKNESS -|LIGHTS LIT'], [1142, 948, 932.5, 'DARKNESS -|LIGHTS UNLIT'], [16528, 935, 918, 'DARKNESS -|NO LIGHTING'], [227286, 757, 738, 'DAYLIGHT']].forEach(([v, top, ly, c], i) => {
  const x = 71 + i * 57.6;
  s += rect(x - 5.3, top, 10.8, 949 - top, P) + t(x + .5, ly, fmt(v), { rot: -90, fs: 7.5, f: '#777' });
  c.split('|').forEach((p, k) => s += t(x - .5, 958.8 + k * 9, p, { fs: 6.8, b: 600, w: p.length > 11 ? 53 : p === 'UNKNOWN' ? 40 : p.length * 4.65, f: '#6a6a6a' }));
});
chart(32, 671, 342, 988, s);

// Road surface condition
s = `<defs><linearGradient id="ru" x2="0" y2="1"><stop stop-color="#c597be"/><stop offset=".5" stop-color="#bb82b3"/><stop offset="1" stop-color="#a66da0"/></linearGradient><linearGradient id="ur" x2="0" y2="1"><stop stop-color="#994d91"/><stop offset=".5" stop-color="#8f1f84"/><stop offset="1" stop-color="#7f1074"/></linearGradient></defs>`;
s += title(628, 485, 'ROAD SURFACE CONDITION ACCIDENTS BY AREA', 368, 'bold', 15.5);
for (let i = 0; i < 9; i++) {
  const y = Math.round(682 - i * 22.75);
  s += line(386.6, y + .5, 905.6, y + .5, '#c3dcf3') + t(378, y + .9, i ? fmt(i * 20000) : '-', { a: 'end', fs: 7.5, f: '#44546a', w: i > 4 ? 27 : i ? 23 : 0 });
}
[['Dry', 66469, 142498, 11], ['Flood over 3cm. deep', 287, 87, 70], ['Frost or ice', 6899, 5179, 35], ['Snow', 2387, 2371, 19], ['Wet or damp', 33270, 48209, 42], ['(blank)', 129, 188, 23]].forEach(([c, a, b, w], i) => {
  const x = 429.9 + i * 86.5, ha = Math.max(1, a / 160000 * 182), hb = Math.max(1, b / 160000 * 182), d = -8;
  s += rect(x - 30, 682 - ha, 26.5, ha, 'url(#ru)') + rect(x + 3, 682 - hb, 27, hb, 'url(#ur)');
  s += t(x - 16.5, 682 - ha + d, fmt(a), { fs: 7.5, f: '#44546a', b: 600 }) + t(x + 17, 682 - hb + d, fmt(b), { fs: 7.5, f: '#44546a', b: 600 });
  s += t(x, 693.5, c, { fs: 7.5, f: '#34445a', w });
});
s += rect(598, 709.5, 4.5, 4.5, '#bb82b3') + t(605, 711.8, 'RURAL', { a: 'start', fs: 7.5, f: '#34445a', w: 22 }) + rect(634, 709.5, 4.5, 4.5, '#8a1b7f') + t(640, 711.8, 'URBAN', { a: 'start', fs: 7.5, f: '#34445a', w: 24 });
chart(342, 461, 917, 726, s, '#fff', '#cfe0f5');

// Casualties by area
function ring(cx, cy, R, r, a0, a1, f) {
  const p = (q, a) => `${cx + q * Math.sin(a)} ${cy - q * Math.cos(a)}`, big = a1 - a0 > Math.PI ? 1 : 0;
  return `<path d="M${p(R, a0)}A${R} ${R} 0 ${big} 1 ${p(R, a1)}L${p(r, a1)}${r ? `A${r} ${r} 0 ${big} 0 ${p(r, a0)}` : ''}z" fill="${f}"/>`;
}
const T = Math.PI * 2;
s = `<defs><pattern id="ht" width="5" height="5" patternUnits="userSpaceOnUse"><rect width="5" height="5" fill="#fff"/><path d="M-1 -1L6 6M-1 4L1 6M4 -1L6 1" stroke="#ececec" stroke-width="1.600"/></pattern><filter id="sh" x="-30%" y="-30%" width="160%" height="160%"><feDropShadow dx="0" dy="1" stdDeviation="7" flood-color="#000" flood-opacity=".38"/></filter></defs>`;
s += rect(923, 459, 280, 271, 'url(#ht)') + title(1063, 478, 'NO. OF CASUALTIES BY', 203, 'bold', 16) + title(1062.5, 500, 'AREA', 51, 'bold', 16);
s += `<g filter="url(#sh)">${ring(1062, 609.3, 77.3, 54, 0, T * .39, '#bb87b3')}${ring(1062, 609.3, 77.3, 54, T * .39, T, '#8c2480')}</g>`;
s += t(1124, 588, '39%', { f: '#fff', b: 700, fs: 7.5 }) + t(1001, 633, '61%', { f: '#fff', b: 700, fs: 7.5 });
s += rect(1030, 709, 66, 16, '#fff') + rect(1036, 714.5, 4, 4, '#bb87b3') + t(1042, 717, 'Rural', { a: 'start', w: 17 }) + rect(1066, 714.5, 4, 4, '#8c2480') + t(1072, 717, 'Urban', { a: 'start', w: 20 });
chart(922, 458, 1204, 731, s);

// Accident by weather conditions
s = '';
for (let i = 0; i < 6; i++) {
  const y = 646 - i * 27.15;
  s += `<path d="M1257.500 ${y + 6.7}L1266 ${y}H1508" fill="none" stroke="#dcdcdc"/>` + t(1248.5, y + 8.3, i ? fmt(i * 50000) : '-', { a: 'end', fs: 7.8, w: i > 1 ? 27 : i ? 22.5 : 0 });
}
s += title(1367, 467, 'ACCIDENT BY WEATHER', 182, 'normal') + title(1367, 489, 'CONDITIONS', 89, 'normal') + t(1319, 491, '244,496', { fs: 7.5, w: 27 });
[['Fine + high winds', 3148, 1275, 631.5], ['Fine no high winds', 244496, 0, 0], ['Fog or mist', 1690, 1329, 634], ['Other', 8802, 1354.7, 633], ['Raining + high winds', 3526, 1381.6, 630], ['Raining no high winds', 34877, 1411, 618], ['Snowing + high winds', 538, 1436, 627], ['Snowing no high winds', 4839, 1461, 629.5], ['(blank)', 6057, 1489.4, 631]].forEach(([c, v, lx, ly], i) => {
  const x = 1267 + i * 27, h = v / 50000 * 27.1, w = 10.6, b = 651, y = b - h;
  s += `<path d="M${x + w} ${b}v${-h}l4 -2.700v${h}z" fill="#6a1161"/><path d="M${x} ${y}l4 -2.700h${w}l-4 2.700z" fill="#7c1a71"/>` + rect(x, y, w, h + .3, P);
  if (lx) s += line(lx, ly + 5, x + 9, y - (h > 10 ? -10 : 1), '#a6a6a6') + t(lx, ly, fmt(v), { fs: 7.8, f: '#404040' });
  s += t(1271.5 + i * 27, 663.5, c, { a: 'end', rot: -45, fs: 7.8 });
});
s += line(1318, 496, 1305, 586, '#a6a6a6');
chart(1209, 447, 1525, 727, s);

// Accident by speed limit
s = `<defs><pattern id="sp" width="4" height="4" patternUnits="userSpaceOnUse"><path d="M-1 -1L5 5M-1 3L1 5M3 -1L5 1" stroke="#d4d4d4" stroke-width=".9"/></pattern></defs>` + rect(412, 775, 448, 182.5, 'url(#sp)');
s += title(642, 754.3, 'ACCIDENT BY SPEED LIMIT', 223);
for (let i = 0; i < 6; i++) {
  const y = Math.round(957 - i * 36.4) + .5;
  s += line(412, y, 860, y) + t(403, y + .5, i ? fmt(i * 50000) : '-', { a: 'end', fs: 7.8, w: i > 1 ? 27 : i ? 22 : 0 });
}
for (let i = 0; i < 9; i++) {
  const x = 412.5 + i * 55.9;
  s += (i ? line(x, 775, x, 957) : '') + t(x, 968, i * 10);
}
const speed = [[10, 3, 468.5, 945.7], [15, 2, 496.5, 945.7], [20, 2899, 544.3, 944.7], [30, 200040, 580.7, 800.7], [40, 25650, 645.3, 919.7], [50, 10191, 692.8, 938.7], [60, 46826, 748.7, 911.7], [70, 22362, 805, 929.7]];
const pt = ([x, v]) => [412.3 + x * 5.593, 957.3 - v / 250000 * 182];
s += line(645, 926, 637, 937, '#999') + `<path d="M524 954l2-10h4" fill="none" stroke="#999"/><polyline points="${speed.map(p => pt(p).join()).join(' ')}" fill="none" stroke="#dba9d5" stroke-width="1.100"/>`;
speed.forEach(p => {
  const [x, y] = pt(p);
  s += `<path d="M${x} ${y - 2.3}l2.300 2.300-2.300 2.300-2.300-2.300z" fill="#fff" stroke="${P}" stroke-width="1.300"/>` + t(p[2], p[3], fmt(p[1]), { fs: 7.6, f: '#404040', w: p[1] > 99999 ? 27 : p[1] > 9999 ? 23 : p[1] > 99 ? 19 : 0 });
});
chart(344, 730, 889, 987, s);

// Vehicle types
s = title(1106, 756.3, 'VEHICLE TYPES AND NO OF CASUALITIES', 274, 'normal', 15) + rect(1074, 776, 8, 7, P) + t(1085, 779.8, 'No of Casualities', { a: 'start', w: 56 });
for (let i = 0; i <= 35; i++) s += line(943, 913.3 - i * 3.257, 1313.5, 913.3 - i * 3.257, i % 5 ? '#f0f0f0' : '#d6d6d6');
for (let i = 0; i < 8; i++) s += t(937, 914 - i * 16.29, i ? fmt(i * 50000) + '.00' : '-', { a: 'end', fs: 7.8, w: i > 1 ? 38 : i ? 34 : 0 });
s += line(943.5, 799, 943.5, 913);
[['Agricultural…', 912.7, 925, 969], ['Bus or coach (17…', 909.3, 917, 977], ['Car', 807, 919, 931], ['Goods 7.5…', 910.3, 927, 967], ['Goods over 3.5t.…', 912.3, 917, 977], ['Minibus (8 - 16…', 912.7, 920, 974], ['Motorcycle…', 910.3, 926, 969], ['Motorcycle 50cc…', 911.7, 917, 977.5], ['Motorcycle over…', 911.3, 918, 976], ['Motorcycle over…', 908.3, 918, 976], ['Other vehicle', 912.3, 919, 963], ['Pedal cycle', 913.3, 919, 957], ['Ridden horse', 913.3, 919, 963], ['Taxi/Private hire…', 910.3, 917, 976], ['Van / Goods 3.5…', 906, 918, 976]].forEach(([c, y, a, b], i) => {
  const x = 955.5 + i * 24.65;
  s += `<path d="M${x - 3} ${y - 3}l6 6M${x + 3} ${y - 3}l-6 6" stroke="#ab4aa0" stroke-width="1"/><path d="M${x - 5.5} ${y}h11" stroke="#7a1f6e" stroke-width="1.200"/>`;
  s += t(x + .8, a, c, { a: 'end', rot: -90, w: b - a, fs: 7.8 });
});
chart(893, 740, 1320, 987, s);

// Accident severity
const hatch = (id, bg, fg) => `<pattern id="${id}" width="4" height="4" patternUnits="userSpaceOnUse"><rect width="4" height="4" fill="${bg}"/><path d="M-1 5L5 -1M-1 1L1 -1M3 5L5 3" stroke="${fg}" stroke-width="1.100"/></pattern>`;
s = `<defs>${hatch('pf', '#b56fae', '#7a1f6e')}${hatch('ps', '#edc4ea', '#a62f99')}${hatch('pl', '#f4eaf2', '#cfa6ca')}</defs>`;
s += title(1409.3, 752, 'ACCIDENT', 77, 'normal') + title(1409.3, 773.7, 'SEVERITY', 77, 'normal');
s += rect(1383, 793.5, 4, 4, '#8c2480') + t(1389, 796, 'Fatal', { a: 'start', w: 16 }) + rect(1413, 793.5, 4, 4, '#b03aa5') + t(1419, 796, 'Serious', { a: 'start', w: 24 }) + rect(1451, 793.5, 4, 4, '#d9b8d5') + t(1457, 796, 'Slight', { a: 'start', w: 19 });
s += ring(1428, 894.7, 70.5, 0, T * .148, T * 1, 'url(#pl)') + ring(1428.5, 894, 69.5, 0, .0, T * .0128, 'url(#pf)') + ring(1430.5, 893, 68.5, 0, T * .0128, T * .145, 'url(#ps)');
s += line(1428, 824, 1428, 892, '#fff', 1.4) + line(1433.5, 824, 1429.5, 892, '#fff', 1.2) + line(1429, 893.5, 1484, 850.5, '#fff', 1.4);
s += t(1433, 816, '3,953', { fs: 7.8, f: '#404040' }) + t(1479, 825, '40,740', { fs: 7.8, f: '#404040' }) + t(1378, 968.3, '263,280', { fs: 7.8, f: '#404040' });
chart(1327, 730, 1529, 988, s);

// Header banner, counters and pictograms
s = `<defs><linearGradient id="bn" x2="0" y2="1"><stop stop-color="#cfa0c8"/><stop offset="1" stop-color="#c07ab3"/></linearGradient></defs><path d="M539 381.500H1224V434a12 12 0 0 1-12 12H527.500V393a12 12 0 0 1 12-11.500z" fill="url(#bn)" stroke="#a02b93"/>`;
s += t(872, 412.5, 'ROAD ACCIDENT&#160; REPORT FOR 2021 &amp; 2022', { fs: 30.5, w: 664, b: 'bold', c: ' font-style="italic" class="ttl banner"' });
s += `<rect x="455.500" y="404.500" width="72" height="42" fill="none" stroke="#bfbfbf"/><rect x="1298.500" y="395.500" width="78" height="37" fill="none" stroke="#bfbfbf"/>`;
s += t(492.3, 418, '307,973', { fs: 16, f: '#fff', w: 55 }) + t(1338, 409.7, '417,883', { fs: 16.5, f: '#fff', w: 61 });
s += `<path fill-rule="evenodd" d="M360 418q0-5 4-8l12-12q3-3 7-3h31q4 0 7 3l16 14h7q9 2 10 12v4q0 5-5 5h-2a13 13 0 0 0-26 0h-29a13 13 0 0 0-26 0q-6 0-6-6zM367 412h26.500v-13H383q-3 0-5 2zM397.500 412H426l-11-10.500q-2.500-2.500-6-2.500H397.500z"/><circle cx="381.500" cy="433" r="8.600"/><circle cx="432.500" cy="433" r="8.600"/>`;
s += `<circle cx="1276.500" cy="388" r="6.200"/><path d="M1247 397l10-9.500 13 8-8 15.500h18l-1 20" fill="none" stroke="#000" stroke-width="5.500" stroke-linejoin="round" stroke-linecap="round"/><path d="M1257 387l17 7-9 16-14 1z"/><circle cx="1255" cy="425.500" r="16.800" fill="none" stroke="#000" stroke-width="2.600" stroke-dasharray="29 2.500"/>`;
chart(350, 378, 1400, 448, s, null);
```
